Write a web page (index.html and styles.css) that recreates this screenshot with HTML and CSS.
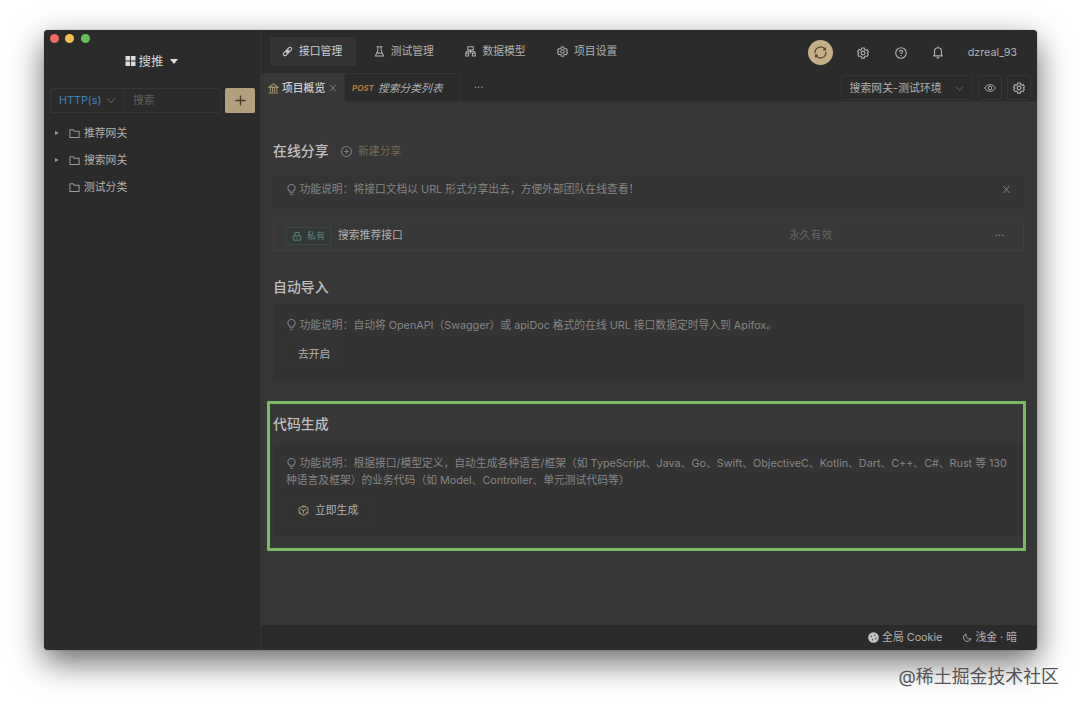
FILE: index.html
```html
<!DOCTYPE html>
<html lang="zh-CN">
<head>
    <meta charset="UTF-8">
    <meta name="viewport" content="width=device-width, initial-scale=1.0">
    <title>搜推 - 项目概览</title>
    <link rel="stylesheet" href="styles.css">
</head>
<body>
    <svg class="sprite" aria-hidden="true">
        <symbol id="i-folder" viewBox="0 0 12 12"><path d="M1 2h3.600l1.200 1.500H11V10.300H1z"/></symbol>
        <symbol id="i-down" viewBox="0 0 12 12"><path d="M1.500 3.500 6 8.700l4.500-5.200"/></symbol>
        <symbol id="i-close" viewBox="0 0 12 12"><path d="m2 1.500 8 9m0-9-8 9"/></symbol>
        <symbol id="i-gear" viewBox="0 0 24 24"><path d="M9.500 2h5l.8 3.200 2 1.100 3.100-.9 2.400 4.300-2.300 2.300 2.300 2.600-2.400 4.300-3.100-.9-2 1.100-.8 3.100h-5l-.8-3.100-2-1.100-3.100.9-2.400-4.300L3.500 12 1.200 9.700l2.400-4.300 3.100.9 2-1.100z"/><circle cx="12" cy="12" r="3.800"/></symbol>
        <symbol id="i-bulb" viewBox="0 0 12 12"><path d="M4.300 9V7.700C2.800 6.900 2 5.900 2 4.500a4 4 0 0 1 8 0c0 1.400-.8 2.400-2.300 3.200V9zM4.500 11.300h3"/></symbol>
    </svg>

    <div class="window">
        <div class="sidebar">
            <div class="lights">
                <span class="light red"></span>
                <span class="light yellow"></span>
                <span class="light green"></span>
            </div>
            <div class="project">
                <svg class="project-icon" viewBox="0 0 11 11"><path d="M0 0h5v5H0zM6 0h5v5H6zM0 6h5v5H0zM6 6h5v5H6z"/></svg>
                <span>搜推</span>
                <span class="caret"></span>
            </div>
            <div class="search-row">
                <div class="search-box">
                    <div class="protocol">HTTP(s) <svg class="icon"><use href="#i-down"/></svg></div>
                    <div class="placeholder">搜索</div>
                </div>
                <div class="add-button"><svg viewBox="0 0 12 12"><path d="M6 .5v11M.5 6h11"/></svg></div>
            </div>
            <ul class="tree">
                <li><span class="arrow"></span><svg class="icon"><use href="#i-folder"/></svg>推荐网关</li>
                <li><span class="arrow"></span><svg class="icon"><use href="#i-folder"/></svg>搜索网关</li>
                <li><span class="arrow hidden"></span><svg class="icon"><use href="#i-folder"/></svg>测试分类</li>
            </ul>
        </div>

        <div class="main">
            <div class="header">
                <div class="nav">
                    <div class="nav-item active">
                        <svg class="icon" viewBox="0 0 12 12"><path d="M4.300 7.700 7.700 4.300M5.200 4.300l2.500-2.500a1.500 1.500 0 0 1 2.100 0l.4.4a1.500 1.500 0 0 1 0 2.100L7.700 6.800zM6.800 7.700l-2.500 2.500a1.500 1.500 0 0 1-2.100 0l-.4-.4a1.500 1.500 0 0 1 0-2.100l2.500-2.500z"/></svg>
                        接口管理
                    </div>
                    <div class="nav-item">
                        <svg class="icon" viewBox="0 0 12 12"><path d="M2.800.8h6.400M4.200.8v4L1.500 11h9L7.800 4.800v-4M3 7.700c2-.8 3.700.8 6 0"/></svg>
                        测试管理
                    </div>
                    <div class="nav-item">
                        <svg class="icon" viewBox="0 0 12 12"><path d="M3 .8h6v3.700H3zM6 4.500V8M1.300 8V6.300h9.400V8M.8 8h3.200v3H.8zM8 8h3.200v3H8z"/></svg>
                        数据模型
                    </div>
                    <div class="nav-item">
                        <svg class="icon gear"><use href="#i-gear"/></svg>
                        项目设置
                    </div>
                </div>
                <div class="tools">
                    <span class="sync"><svg viewBox="0 0 16 16"><path d="M2.200 8.700A5.900 5.900 0 0 1 12.800 4.600M13.800 7.300A5.900 5.900 0 0 1 3.200 11.400M13.200 2.700v2.500h-2.500M2.800 13.300v-2.500h2.500"/></svg></span>
                    <svg class="icon gear"><use href="#i-gear"/></svg>
                    <svg class="icon" viewBox="0 0 12 12"><circle cx="6" cy="6" r="5.300"/><path d="M4.500 4.900C4.500 2.700 7.600 2.900 7.500 4.700 7.400 5.800 6 5.700 6 7M6 8v.9"/></svg>
                    <svg class="icon bell" viewBox="0 0 12 13"><path d="M2.500 9.800V5.300a3.500 3.500 0 0 1 7 0v4.500M1 9.900h10M6 .5v1.200M4.700 11.900h2.600"/></svg>
                    <span class="user">dzreal_93</span>
                </div>
            </div>

            <div class="tabs">
                <div class="tab current">
                    <svg class="icon gold" viewBox="0 0 12 12"><path d="M1 4.500 6 1l5 3.500zM2.500 4.500v5.300M5 4.500v5.300M7.200 4.500v5.300M9.600 4.500v5.300M.8 10.800h10.400"/></svg>
                    <span>项目概览</span>
                    <svg class="icon close"><use href="#i-close"/></svg>
                </div>
                <div class="tab request"><b>POST</b><i>搜索分类列表</i></div>
                <div class="more">···</div>
                <div class="env">
                    <div class="env-select"><span>搜索网关-测试环境</span><svg class="icon"><use href="#i-down"/></svg></div>
                    <div class="env-button"><svg class="icon" viewBox="0 0 14 12"><path d="M.7 6C3.400.8 10.600.8 13.300 6 10.600 11.200 3.400 11.200.7 6z"/><circle cx="7" cy="6" r="2.100"/></svg></div>
                    <div class="env-button"><svg class="icon gear"><use href="#i-gear"/></svg></div>
                </div>
            </div>

            <div class="content">
                <div class="section share">
                    <div class="title-row">
                        <h2>在线分享</h2>
                        <div class="new-share"><svg class="icon" viewBox="0 0 12 12"><circle cx="6" cy="6" r="5.400"/><path d="M6 3.700v4.600M3.700 6h4.600"/></svg>新建分享</div>
                    </div>
                    <div class="tip-bar">
                        <p class="tip"><svg class="icon bulb"><use href="#i-bulb"/></svg>功能说明：将接口文档以 URL 形式分享出去，方便外部团队在线查看！</p>
                        <svg class="icon close"><use href="#i-close"/></svg>
                    </div>
                    <div class="share-item">
                        <span class="tag"><svg class="icon" viewBox="0 0 12 12"><path d="M1.500 5.800h9V11h-9zM3.500 5.800v-4h5v4M6 7.700v1.500"/></svg>私有</span>
                        <span class="share-name">搜索推荐接口</span>
                        <span class="expire">永久有效</span>
                        <span class="dots">···</span>
                    </div>
                </div>

                <div class="section import">
                    <h2>自动导入</h2>
                    <div class="card">
                        <p class="tip"><svg class="icon bulb"><use href="#i-bulb"/></svg>功能说明：自动将 OpenAPI（Swagger）或 apiDoc 格式的在线 URL 接口数据定时导入到 Apifox。</p>
                        <div class="button">去开启</div>
                    </div>
                </div>

                <div class="section codegen">
                    <h2>代码生成</h2>
                    <div class="card">
                        <p class="tip"><svg class="icon bulb"><use href="#i-bulb"/></svg>功能说明：根据接口/模型定义，自动生成各种语言/框架（如 TypeScript、Java、Go、Swift、ObjectiveC、Kotlin、Dart、C++、C#、Rust 等 130<br>种语言及框架）的业务代码（如 Model、Controller、单元测试代码等）</p>
                        <div class="button"><svg class="icon gold" viewBox="0 0 12 12"><path d="M6 .8 10.800 3.300v5.400L6 11.200 1.200 8.700V3.300zM3 4.500l3 1.600 3-1.600M6 6v3M6 .8v2M1.200 8.700l1.500-.8M10.800 8.700l-1.500-.8"/></svg>立即生成</div>
                    </div>
                    <div class="highlight"></div>
                </div>
            </div>

            <div class="footer">
                <div class="footer-item"><svg class="cookie" viewBox="0 0 12 12"><circle class="disc" cx="6" cy="6" r="5.800"/><circle cx="3.600" cy="5" r=".9"/><circle cx="7.500" cy="3.500" r=".8"/><circle cx="5" cy="8.500" r=".9"/><circle cx="8.500" cy="7.300" r=".9"/></svg>全局 Cookie</div>
                <div class="footer-item"><svg class="icon" viewBox="0 0 12 12"><path d="M4.800 1.800a4.600 4.600 0 1 0 6 5.600C8.200 8.800 3.900 6.200 4.800 1.800z"/></svg>浅金 · 暗</div>
            </div>
        </div>
    </div>
    <div class="watermark">@稀土掘金技术社区</div>
</body>
</html>
```

FILE: styles.css
```css
* {
    box-sizing: border-box;
}
body {
    margin: 0;
    padding: 29.500px 0 0 43.500px;
    height: 707px;
    overflow: hidden;
    background: #fff;
    color: #b0b0b0;
    font-family: Inter, "Noto Sans CJK SC", sans-serif;
    font-size: 10.800px;
    line-height: 17px;
}
h2, p, ul {
    margin: 0;
    padding: 0;
}
.sprite {
    display: none;
}
.icon {
    width: 11px;
    height: 11px;
    flex: none;
    fill: none;
    stroke: currentColor;
    stroke-width: 1.100;
}
.gear {
    stroke-width: 2.200;
}
.gold {
    color: #a39672;
}
.window {
    display: flex;
    width: 993px;
    height: 620px;
    border-radius: 4px;
    overflow: hidden;
    background: #2b2b2b;
    box-shadow: 0 0 1px rgba(0, 0, 0, 0.6), 0 12px 32px rgba(0, 0, 0, 0.6);
}

/* sidebar */
.sidebar {
    width: 217.500px;
    flex: none;
    border-right: 1px solid #363636;
}
.lights {
    display: flex;
    gap: 6.500px;
    padding: 4px 0 0 6px;
}
.light {
    width: 9px;
    height: 9px;
    border-radius: 50%;
}
.red { background: #ed6a63; }
.yellow { background: #f5bf4f; }
.green { background: #61c554; }
.project {
    display: flex;
    align-items: center;
    height: 20px;
    margin-top: 8.500px;
    padding-left: 81px;
    color: #d4d4d4;
    font-size: 12.500px;
}
.project-icon {
    width: 11px;
    height: 10px;
    margin-right: 3px;
    fill: #dedede;
}
.caret {
    margin-left: 6px;
    border: 4.500px solid transparent;
    border-top: 5.500px solid #dedede;
    border-bottom: 0;
}
.search-row {
    display: flex;
    gap: 4px;
    margin: 17px 5px 0 6.500px;
    height: 25px;
}
.search-box {
    display: flex;
    align-items: center;
    width: 171px;
    border: 1px solid #363636;
    border-radius: 2px;
}
.protocol {
    display: flex;
    align-items: center;
    justify-content: space-between;
    width: 73px;
    height: 100%;
    padding: 0 7px 0 8px;
    border-right: 1px solid #333;
    color: #3e82bd;
}
.protocol .icon {
    width: 10px;
    color: #707070;
}
.placeholder {
    padding-left: 9px;
    color: #5e5e5e;
}
.add-button {
    display: flex;
    align-items: center;
    justify-content: center;
    width: 30px;
    border-radius: 2px;
    background: #b39f7c;
}
.add-button svg {
    width: 11px;
    height: 11px;
    stroke: #4b3c26;
    stroke-width: 1.500;
}
.tree {
    padding: 6.500px 0 0 11.500px;
    list-style: none;
}
.tree li {
    display: flex;
    align-items: center;
    height: 27px;
}
.tree .icon {
    margin-right: 4px;
    color: #999;
}
.arrow {
    margin-right: 10px;
    border: 2.500px solid transparent;
    border-left: 4px solid #999;
    border-right: 0;
}
.hidden {
    visibility: hidden;
}

/* top navigation */
.main {
    display: flex;
    flex: 1;
    flex-direction: column;
    min-width: 0;
}
.header {
    display: flex;
    justify-content: space-between;
    height: 43.500px;
    padding: 7.500px 19.500px 0 9px;
}
.nav {
    display: flex;
    gap: 5.700px;
}
.nav-item {
    display: flex;
    align-items: center;
    gap: 6px;
    width: 86px;
    height: 29px;
    padding-left: 12px;
    border-radius: 2px;
}
.nav-item.active {
    background: #343434;
    color: #d0d0d0;
}
.tools {
    display: flex;
    align-items: center;
    height: 31px;
}
.sync {
    display: flex;
    align-items: center;
    justify-content: center;
    width: 25px;
    height: 25px;
    margin-right: 24.500px;
    border-radius: 50%;
    background: #c5af87;
}
.sync svg {
    width: 15px;
    height: 15px;
    fill: none;
    stroke: #55452d;
    stroke-width: 1.300;
}
.tools .icon {
    width: 12px;
    height: 12px;
    margin-right: 25.500px;
}
.tools .bell {
    height: 13px;
    margin-right: 23.500px;
}

/* tabs */
.tabs {
    display: flex;
    height: 29px;
    border-bottom: 1px solid #333;
}
.tab {
    display: flex;
    align-items: center;
    height: 29px;
    border-right: 1px solid #343434;
    border-top: 1px solid #343434;
}
.tab.current {
    width: 84px;
    padding-left: 7px;
    background: #373737;
    color: #cfcfcf;
    font-weight: 500;
}
.tab .gold {
    margin-right: 3px;
}
.tab .close {
    width: 8px;
    height: 8px;
    margin-left: 4px;
    color: #858585;
    stroke-width: 1.300;
}
.request {
    width: 116px;
    padding-left: 7px;
}
.request b {
    margin-right: 4px;
    color: #b37a3e;
    font-size: 8px;
    font-style: italic;
}
.more {
    padding: 6px 0 0 13px;
    color: #999;
}
.env {
    display: flex;
    gap: 5px;
    height: 25px;
    margin: 2px 6px 0 auto;
}
.env-select, .env-button {
    display: flex;
    align-items: center;
    justify-content: center;
    width: 24px;
    border: 1px solid #353535;
    border-radius: 2px;
}
.env-select {
    justify-content: space-between;
    width: 132px;
    padding: 1px 8px 0;
}
.env-select span {
    letter-spacing: 0.100px;
}
.env-select .icon {
    width: 9px;
    color: #707070;
}
.env-button .icon {
    width: 12px;
    height: 12px;
}

/* project overview */
.content {
    flex: 1;
    padding: 38px 12.500px 0 12px;
    background: #373737;
}
h2 {
    color: #bfbfbf;
    font-size: 13.900px;
    font-weight: 500;
    line-height: 22px;
}
.title-row {
    display: flex;
    align-items: center;
}
.new-share {
    display: flex;
    align-items: center;
    gap: 6px;
    margin-left: 12.500px;
    color: #736b54;
}
.new-share .icon {
    color: #858378;
}
.tip {
    color: #858585;
    letter-spacing: -0.015px;
    white-space: nowrap;
}
.bulb {
    margin: 0 3px 0 -0.500px;
    vertical-align: -1.500px;
}
.tip-bar {
    display: flex;
    align-items: center;
    justify-content: space-between;
    height: 32px;
    margin-top: 14px;
    padding: 0 13px 5px;
    background: #343434;
}
.tip-bar .close {
    width: 9px;
    height: 9px;
    color: #8b8b8b;
    stroke-width: 1.300;
}
.share-item {
    display: flex;
    align-items: center;
    height: 31px;
    margin-top: 12px;
    padding: 0 19px 0 12px;
    border: 1px solid #3f3f3f;
    border-top-color: #383838;
}
.tag {
    display: flex;
    align-items: center;
    gap: 5px;
    height: 18px;
    padding: 0 5px;
    border: 1px solid #35473f;
    background: #313837;
    color: #5a8579;
    font-size: 9px;
}
.tag .icon {
    width: 10px;
    height: 10px;
}
.share-name {
    width: 451px;
    margin-left: 7px;
}
.expire {
    flex: 1;
    color: #656565;
}
.dots {
    color: #8b8b8b;
}
.import {
    margin-top: 24.500px;
}
.codegen {
    position: relative;
    margin-top: 32.500px;
}
.card {
    height: 78px;
    margin-top: 5px;
    padding: 14px 13px;
    background: #333;
}
.codegen .card {
    height: 92px;
    margin-top: 9px;
    padding-top: 11px;
}
.button {
    display: flex;
    align-items: center;
    width: 57px;
    height: 24px;
    margin-top: 9px;
    padding-left: 11px;
    border: 1px solid #373737;
    border-radius: 2px;
}
.codegen .button {
    gap: 6px;
    width: 85px;
}
.highlight {
    position: absolute;
    inset: -12px -2px -15px -6px;
    border: 3px solid #77bd5d;
    border-radius: 1px;
}

/* status bar */
.footer {
    display: flex;
    align-items: center;
    justify-content: flex-end;
    gap: 20px;
    height: 24.500px;
    padding-right: 19.500px;
}
.footer-item {
    display: flex;
    align-items: center;
    gap: 3px;
}
.footer-item .icon {
    width: 10px;
}
.cookie {
    width: 11px;
    height: 11px;
    fill: #555;
}
.cookie .disc {
    fill: #c4c4c4;
}
.watermark {
    margin: 13.500px 21px 0 0;
    color: #555;
    font-size: 17.900px;
    line-height: 28px;
    text-align: right;
}
```
